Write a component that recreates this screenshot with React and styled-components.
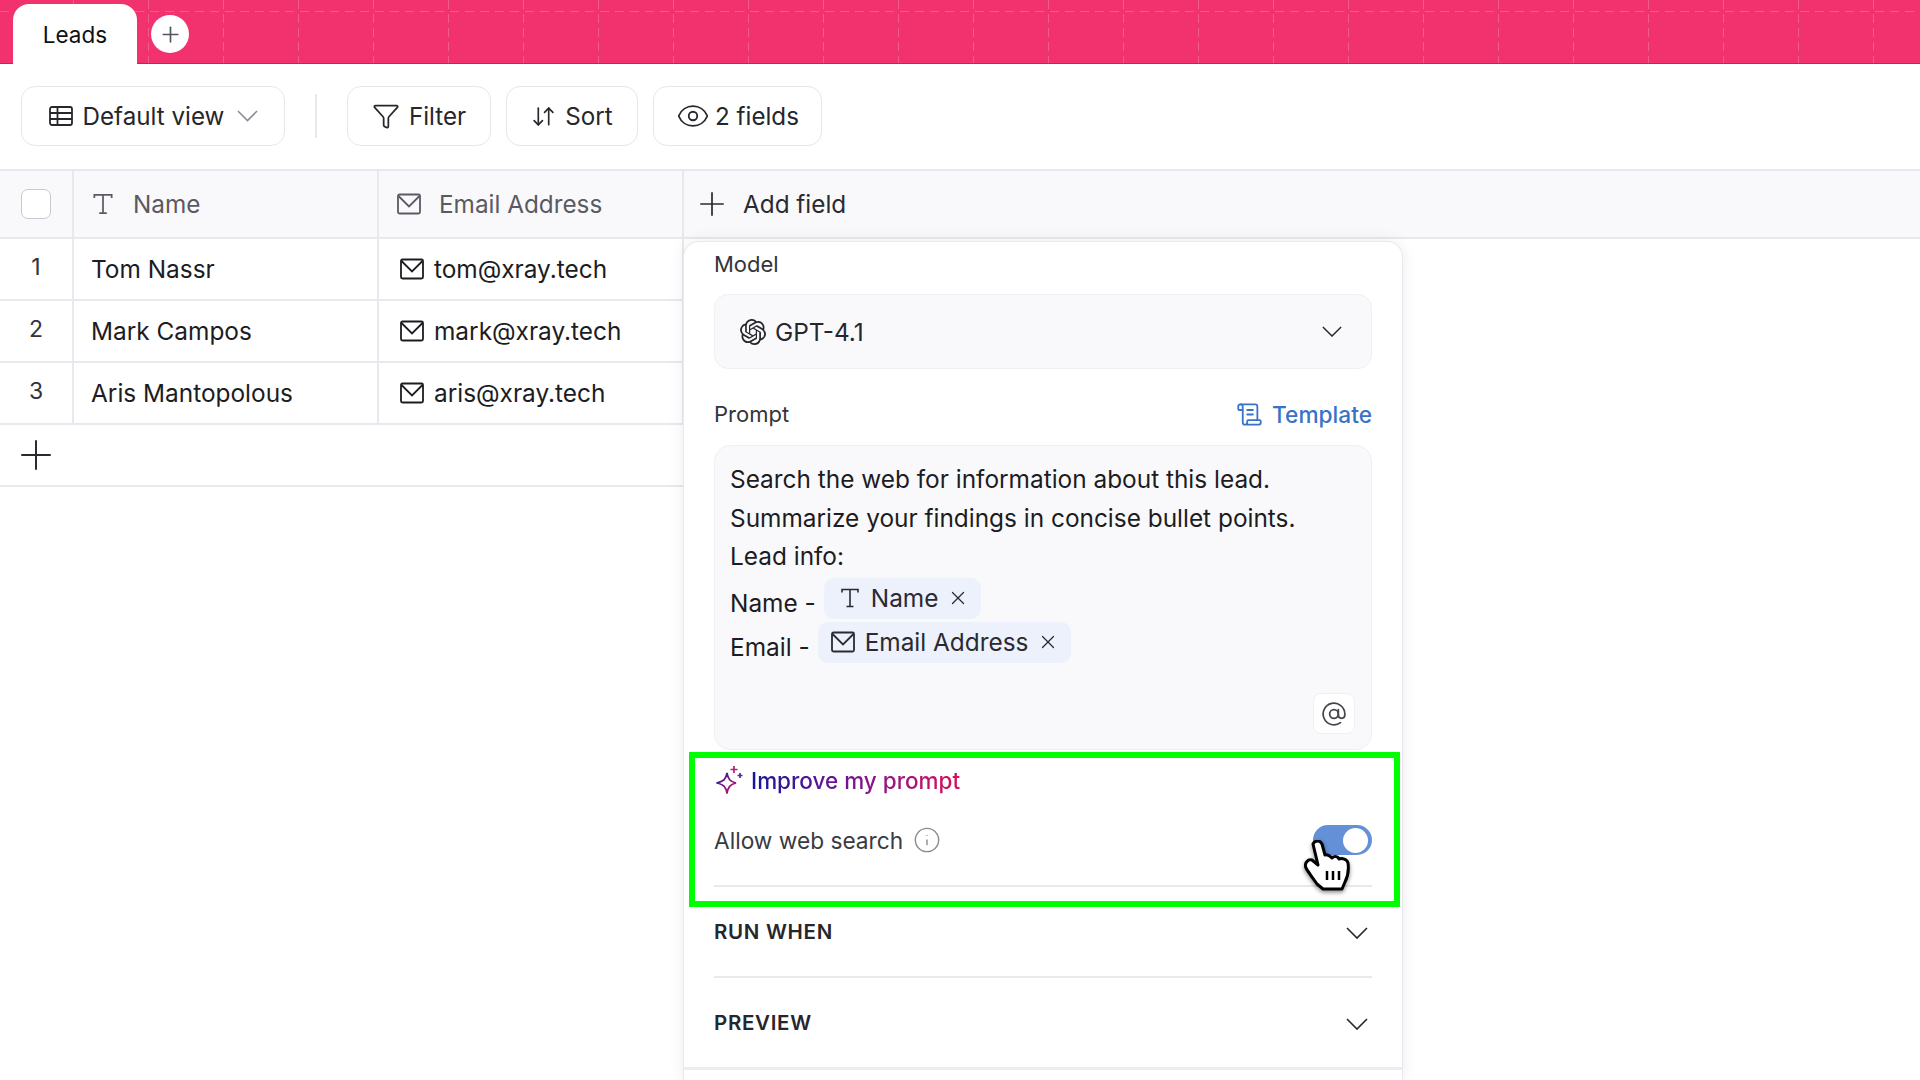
import React from 'react';
import styled, { createGlobalStyle } from 'styled-components';
import { AtSign, Eye, Filter, Info, Plus, ScrollText, X, ArrowDownUp } from 'lucide-react';
import { SiOpenai } from 'react-icons/si';

const GlobalStyle = createGlobalStyle`
    html, body {
        margin: 0;
        padding: 0;
        background: #fff;
    }
    body {
        font-family: Inter, "Liberation Sans", sans-serif;
        color: #1c1c22;
    }
    * {
        box-sizing: border-box;
    }
`;

const Page = styled.div`
    position: relative;
    width: 1920px;
    height: 1080px;
    overflow: hidden;
    background: #fff;
`;

const TabBar = styled.div`
    position: relative;
    display: flex;
    align-items: flex-end;
    gap: 14px;
    height: 64px;
    padding-left: 13px;
    background: #f1326e;
    border-bottom: 1px solid #c9215a;
    &::before {
        content: '';
        position: absolute;
        inset: 0;
        background-image: repeating-linear-gradient(
            to right,
            transparent 0 73px,
            rgba(255, 255, 255, 0.2) 73px 74px,
            transparent 74px 75px
        );
        mask-image: repeating-linear-gradient(to bottom, #000 0 9px, transparent 9px 14px);
    }
    &::after {
        content: '';
        position: absolute;
        left: 0;
        right: 0;
        top: 11px;
        height: 1px;
        background-image: repeating-linear-gradient(
            to right,
            rgba(255, 255, 255, 0.2) 0 9px,
            transparent 9px 15px
        );
    }
`;

const Tab = styled.div`
    position: relative;
    z-index: 1;
    display: flex;
    align-items: center;
    justify-content: center;
    width: 124px;
    height: 60px;
    margin-bottom: -1px;
    background: #fff;
    border-radius: 16px 16px 0 0;
    font-size: 22.5px;
    color: #111;
`;

const AddTab = styled.button`
    position: relative;
    z-index: 1;
    display: flex;
    align-items: center;
    justify-content: center;
    width: 38px;
    height: 38px;
    margin-bottom: 10px;
    padding: 0;
    border: none;
    border-radius: 50%;
    background: #fff;
    color: #55555e;
`;

const Toolbar = styled.div`
    display: flex;
    align-items: center;
    height: 107px;
    padding: 0 0 1px 21px;
    border-bottom: 2px solid #e8e8ee;
`;

const ToolButton = styled.button`
    display: flex;
    align-items: center;
    justify-content: center;
    gap: ${({ $gap }) => $gap || 9}px;
    width: ${({ $width }) => $width}px;
    height: 60px;
    margin-right: ${({ $after }) => $after || 15}px;
    padding: 0;
    background: #fff;
    border: 1.5px solid #e6e6ec;
    border-radius: 14px;
    font-family: inherit;
    font-size: 24.2px;
    color: #26262c;
`;

const Divider = styled.span`
    width: 2px;
    height: 44px;
    margin-right: 30px;
    background: #e8e8ee;
`;

const HeaderRow = styled.div`
    display: grid;
    grid-template-columns: 74px 305px 305px 1fr;
    height: 68px;
    background: #f9f9fb;
    border-bottom: 2px solid #e8e8ee;
`;

const HeaderCell = styled.div`
    display: flex;
    align-items: center;
    gap: ${({ $gap }) => $gap || 18}px;
    padding-left: ${({ $pad }) => $pad || 0}px;
    justify-content: ${({ $center }) => ($center ? 'center' : 'flex-start')};
    border-right: ${({ $last }) => ($last ? 'none' : '2px solid #e8e8ee')};
    font-size: 24.3px;
    color: ${({ $dark }) => ($dark ? '#2a2a30' : '#5a5a64')};
`;

const Checkbox = styled.span`
    width: 30px;
    height: 30px;
    background: #fff;
    border: 1.5px solid #c9c9d0;
    border-radius: 7px;
`;

const Row = styled.div`
    display: grid;
    grid-template-columns: 74px 305px 305px;
    width: 684px;
    height: 62px;
    border-bottom: 2px solid #e8e8ee;
`;

const IndexCell = styled.div`
    display: flex;
    align-items: center;
    justify-content: center;
    padding-bottom: 5px;
    border-right: 2px solid #e8e8ee;
    font-size: 23px;
    color: #33333a;
`;

const NameCell = styled.div`
    display: flex;
    align-items: center;
    padding-left: 17px;
    border-right: 2px solid #e8e8ee;
    font-size: 24.4px;
    color: #1c1c22;
`;

const EmailCell = styled.div`
    display: flex;
    align-items: center;
    gap: 9px;
    padding-left: 20px;
    border-right: 2px solid #e8e8ee;
    font-size: 24.4px;
    color: #1c1c22;
`;

const AddRow = styled.div`
    display: flex;
    align-items: center;
    width: 684px;
    height: 62px;
    padding-left: 12px;
    border-bottom: 2px solid #e8e8ee;
    color: #2a2a30;
`;

const Panel = styled.div`
    position: absolute;
    left: 683px;
    top: 241px;
    display: flex;
    flex-direction: column;
    width: 720px;
    height: 839px;
    padding: 8px 30px 0 30px;
    background: #fff;
    border: 1.5px solid #e8e8ee;
    border-bottom: none;
    border-radius: 16px 16px 0 0;
    box-shadow: 0 0 16px rgba(30, 30, 60, 0.08);
`;

const FieldLabel = styled.div`
    height: 28px;
    line-height: 28px;
    font-size: 22px;
    color: #34343b;
`;

const Select = styled.div`
    display: flex;
    align-items: center;
    justify-content: space-between;
    height: 75px;
    margin-top: 16px;
    padding: 0 29px 0 25px;
    background: #f9f9fb;
    border: 1.5px solid #f0f0f4;
    border-radius: 14px;
    font-size: 24.4px;
    color: #26262c;
`;

const SelectValue = styled.span`
    display: flex;
    align-items: center;
    gap: 9px;
`;

const PromptHead = styled.div`
    display: flex;
    align-items: center;
    justify-content: space-between;
    height: 28px;
    margin-top: 31px;
`;

const TemplateLink = styled.span`
    display: flex;
    align-items: center;
    gap: 9px;
    font-size: 22.7px;
    font-weight: 500;
    color: #3a72c6;
`;

const PromptBox = styled.div`
    position: relative;
    height: 305px;
    margin-top: 17px;
    padding: 14px 15px 0;
    background: #f9f9fb;
    border: 1.5px solid #f0f0f4;
    border-radius: 16px;
    font-size: 24.4px;
    color: #1c1c22;
`;

const PromptLine = styled.div`
    height: 38.5px;
    line-height: 38.5px;
`;

const MentionLine = styled.div`
    display: flex;
    align-items: flex-start;
    gap: 8px;
    height: 44px;
    margin-top: ${({ $top }) => $top || 0}px;
    line-height: 50px;
`;

const Chip = styled.span`
    display: flex;
    align-items: center;
    gap: 9px;
    height: 41px;
    line-height: 41px;
    padding: 0 12px 0 ${({ $left }) => $left || 12}px;
    background: #ecf1fb;
    border-radius: 10px;
    color: #2a2a33;
`;

const AtButton = styled.span`
    position: absolute;
    right: 16px;
    bottom: 15px;
    display: flex;
    align-items: center;
    justify-content: center;
    width: 42px;
    height: 41px;
    background: #fff;
    border: 1px solid #f0f0f4;
    border-radius: 8px;
    color: #44444c;
`;

const ImproveLink = styled.div`
    display: flex;
    align-items: center;
    gap: 8px;
    height: 30px;
    margin-top: 15px;
    padding-left: 1px;
`;

const GradientText = styled.span`
    font-size: 22.5px;
    font-weight: 500;
    background: linear-gradient(90deg, #16169a 0%, #7a1490 50%, #d8105a 100%);
    -webkit-background-clip: text;
    background-clip: text;
    color: transparent;
`;

const SearchRow = styled.div`
    position: relative;
    display: flex;
    align-items: center;
    justify-content: space-between;
    height: 30px;
    margin-top: 30px;
`;

const SearchLabel = styled.span`
    display: flex;
    align-items: center;
    gap: 10px;
    font-size: 22.7px;
    color: #3a3a42;
`;

const Toggle = styled.span`
    display: flex;
    align-items: center;
    justify-content: flex-end;
    width: 59px;
    height: 30px;
    padding-right: 4px;
    background: #6490d8;
    border-radius: 15px;
    &::after {
        content: '';
        width: 25px;
        height: 25px;
        border-radius: 50%;
        background: #fff;
    }
`;

const HandCursor = styled.svg`
    position: absolute;
    right: 21px;
    top: 15px;
    filter: drop-shadow(0 2px 2px rgba(0, 0, 0, 0.45));
`;

const Accordion = styled.div`
    display: flex;
    align-items: flex-start;
    justify-content: space-between;
    height: 91px;
    margin-top: ${({ $top }) => $top || 0}px;
    padding: 32px 4px 0 0;
    border-top: 2px solid #e8e8ee;
    font-size: 20.5px;
    font-weight: 600;
    letter-spacing: 0.7px;
    color: #26262c;
`;

const FootLine = styled.div`
    height: 3px;
    margin: 0 -30px;
    background: #ececf1;
`;

const Annotation = styled.div`
    position: absolute;
    left: 5px;
    top: 510px;
    width: 711px;
    height: 155px;
    border: 6px solid #00ff00;
    pointer-events: none;
`;

const ChevronMark = styled.svg`
    flex: none;
    margin-top: ${({ $top }) => $top || 0}px;
    margin-left: ${({ $left }) => $left || 0}px;
    color: ${({ $tint }) => $tint || '#26262c'};
`;

const Chevron = ({ width = 22, tint, top, left }) => (
    <ChevronMark
        width={width}
        height={width * 0.55}
        viewBox="0 0 22 12"
        fill="none"
        stroke="currentColor"
        strokeWidth="1.6"
        $tint={tint}
        $top={top}
        $left={left}
    >
        <path d="M1 1L11 11L21 1" />
    </ChevronMark>
);

const TypeIcon = ({ size = 24 }) => (
    <svg width={size} height={size} viewBox="0 0 24 24" fill="none" stroke="currentColor" strokeWidth="1.6">
        <path d="M4 6.5V3.5H20V6.5M12 3.5V20.5M8.5 20.5H15.5" />
    </svg>
);

const MailIcon = ({ size = 26 }) => (
    <svg width={size} height={size} viewBox="0 0 26 26" fill="none" stroke="currentColor" strokeWidth="1.8">
        <rect x="2" y="3.5" width="22" height="19" rx="1.5" />
        <path d="M2.5 5L13 15.5L23.5 5" />
    </svg>
);

const TableIcon = () => (
    <svg width="26" height="26" viewBox="0 0 26 26" fill="none" stroke="currentColor" strokeWidth="1.8">
        <rect x="2" y="4" width="22" height="18" rx="2" />
        <path d="M2 10H24M2 16H24M9.5 4V22" />
    </svg>
);

const SparkleIcon = () => (
    <svg width="28" height="30" viewBox="0 0 28 30" fill="none" strokeWidth="1.7">
        <defs>
            <linearGradient id="spark" x1="0" y1="0" x2="1" y2="1">
                <stop offset="0" stopColor="#1a1aa8" />
                <stop offset="1" stopColor="#d8105a" />
            </linearGradient>
        </defs>
        <path
            d="M12 8C13 14 15 16.5 21 18C15 19.5 13 22 12 28.5C11 22 9 19.5 1.5 18C9 16.5 11 14 12 8Z"
            stroke="url(#spark)"
        />
        <path d="M19 1V8M15.5 4.5H22.5" stroke="#b0207a" />
        <path d="M25 8V13M22.5 10.5H27.5" stroke="#4a2aa0" />
    </svg>
);

const leads = [
    { id: 1, name: 'Tom Nassr', email: 'tom@xray.tech' },
    { id: 2, name: 'Mark Campos', email: 'mark@xray.tech' },
    { id: 3, name: 'Aris Mantopolous', email: 'aris@xray.tech' },
];

const App = () => (
    <Page>
        <GlobalStyle />
        <TabBar>
            <Tab>Leads</Tab>
            <AddTab>
                <Plus size={25} strokeWidth={1.6} />
            </AddTab>
        </TabBar>
        <Toolbar>
            <ToolButton $width={264} $after={30}>
                <TableIcon />
                Default view
                <Chevron width={21} tint="#8a8a94" left={4} />
            </ToolButton>
            <Divider />
            <ToolButton $width={144}>
                <Filter size={28} strokeWidth={1.5} />
                Filter
            </ToolButton>
            <ToolButton $width={132}>
                <ArrowDownUp size={25} strokeWidth={1.6} />
                Sort
            </ToolButton>
            <ToolButton $width={169} $gap={5}>
                <Eye size={34} strokeWidth={1.3} />
                2 fields
            </ToolButton>
        </Toolbar>
        <HeaderRow>
            <HeaderCell $center>
                <Checkbox />
            </HeaderCell>
            <HeaderCell $pad={16} $gap={17}>
                <TypeIcon size={26} />
                Name
            </HeaderCell>
            <HeaderCell $pad={17} $gap={17}>
                <MailIcon />
                Email Address
            </HeaderCell>
            <HeaderCell $pad={9} $gap={12} $last $dark>
                <Plus size={38} strokeWidth={1.1} />
                Add field
            </HeaderCell>
        </HeaderRow>
        {leads.map(({ id, name, email }) => (
            <Row key={id}>
                <IndexCell>{id}</IndexCell>
                <NameCell>{name}</NameCell>
                <EmailCell>
                    <MailIcon />
                    {email}
                </EmailCell>
            </Row>
        ))}
        <AddRow>
            <Plus size={48} strokeWidth={1} />
        </AddRow>

        <Panel>
            <FieldLabel>Model</FieldLabel>
            <Select>
                <SelectValue>
                    <SiOpenai size={26} />
                    GPT-4.1
                </SelectValue>
                <Chevron width={20} />
            </Select>
            <PromptHead>
                <FieldLabel>Prompt</FieldLabel>
                <TemplateLink>
                    <ScrollText size={27} strokeWidth={1.6} />
                    Template
                </TemplateLink>
            </PromptHead>
            <PromptBox>
                <PromptLine>Search the web for information about this lead.</PromptLine>
                <PromptLine>Summarize your findings in concise bullet points.</PromptLine>
                <PromptLine>Lead info:</PromptLine>
                <MentionLine $top={2}>
                    Name -
                    <Chip $left={14}>
                        <TypeIcon size={24} />
                        Name
                        <X size={22} strokeWidth={1.4} />
                    </Chip>
                </MentionLine>
                <MentionLine>
                    Email -
                    <Chip>
                        <MailIcon />
                        Email Address
                        <X size={22} strokeWidth={1.4} />
                    </Chip>
                </MentionLine>
                <AtButton>
                    <AtSign size={26} strokeWidth={1.6} />
                </AtButton>
            </PromptBox>
            <ImproveLink>
                <SparkleIcon />
                <GradientText>Improve my prompt</GradientText>
            </ImproveLink>
            <SearchRow>
                <SearchLabel>
                    Allow web search
                    <Info size={28} strokeWidth={1.2} color="#8a8a92" />
                </SearchLabel>
                <Toggle />
                <HandCursor width="47" height="51" viewBox="0 0 47 51">
                    <path
                        d="M9 4C11 0 16 0 18 4L21 15C24 14 26 16 28 18C30 16 34 16 35 19C38 18 43 19 44 23C45 30 43 38 41 42L38 49H19L13 44C9 38 4 32 2 28C0 23 4 19 8 20L14 25Z"
                        fill="#fff"
                        stroke="#000"
                        strokeWidth="3"
                        strokeLinejoin="round"
                    />
                    <path d="M23 31V40M29 31V40M35 31V40" stroke="#000" strokeWidth="2.5" fill="none" />
                </HandCursor>
            </SearchRow>
            <Accordion $top={30}>
                RUN WHEN
                <Chevron top={8} />
            </Accordion>
            <Accordion>
                PREVIEW
                <Chevron top={8} />
            </Accordion>
            <FootLine />
            <Annotation />
        </Panel>
    </Page>
);

export default App;
